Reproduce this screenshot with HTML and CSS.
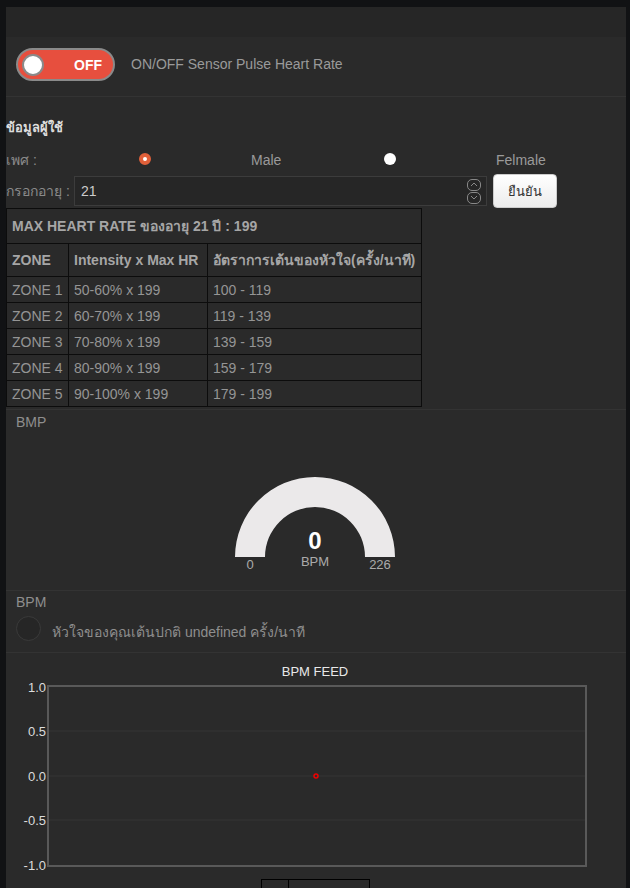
FILE: index.html
```html
<!DOCTYPE html>
<html>
<head>
<meta charset="utf-8">
<link rel="stylesheet" href="styles.css">
</head>
<body>
<div class="page">
  <div class="topbar"></div>
  <div class="main">
    <section class="switch-row">
      <div class="toggle"><span class="knob"></span><span class="toggle-text">OFF</span></div>
      <span class="switch-label">ON/OFF Sensor Pulse Heart Rate</span>
    </section>

    <section class="user">
      <div class="user-title">ข้อมูลผู้ใช้</div>
      <div class="gender-row">
        <span class="lbl">เพศ :</span>
        <span class="radio checked"></span>
        <span class="opt">Male</span>
        <span class="radio"></span>
        <span class="opt">Felmale</span>
      </div>
      <div class="age-row">
        <span class="lbl">กรอกอายุ :</span>
        <div class="age-input">
          <span class="age-val">21</span>
          <span class="spin">
            <span class="spin-btn"><svg width="8" height="5" viewBox="0 0 8 5"><path d="M1 4 L4 1 L7 4" fill="none" stroke="#888" stroke-width="1"/></svg></span>
            <span class="spin-btn"><svg width="8" height="5" viewBox="0 0 8 5"><path d="M1 1 L4 4 L7 1" fill="none" stroke="#888" stroke-width="1"/></svg></span>
          </span>
        </div>
        <button class="confirm">ยืนยัน</button>
      </div>
      <table class="zones">
        <tr><th colspan="3" class="title">MAX HEART RATE ของอายุ 21 ปี : 199</th></tr>
        <tr class="head"><th class="c1">ZONE</th><th class="c2">Intensity x Max HR</th><th class="c3">อัตราการเต้นของหัวใจ(ครั้ง/นาที)</th></tr>
        <tr><td>ZONE 1</td><td>50-60% x 199</td><td>100 - 119</td></tr>
        <tr><td>ZONE 2</td><td>60-70% x 199</td><td>119 - 139</td></tr>
        <tr><td>ZONE 3</td><td>70-80% x 199</td><td>139 - 159</td></tr>
        <tr><td>ZONE 4</td><td>80-90% x 199</td><td>159 - 179</td></tr>
        <tr><td>ZONE 5</td><td>90-100% x 199</td><td>179 - 199</td></tr>
      </table>
    </section>

    <section class="gauge-sec">
      <div class="sec-label">BMP</div>
      <div class="gauge">
        <svg class="gauge-arc" width="160" height="80" viewBox="0 0 160 80">
          <path d="M0 80 A80 80 0 0 1 160 80 L130 80 A50 50 0 0 0 30 80 Z" fill="#ebe9ea"/>
        </svg>
        <div class="gauge-val">0</div>
        <div class="gauge-unit">BPM</div>
        <div class="gauge-scale"><span>0</span><span>226</span></div>
      </div>
    </section>

    <section class="bpm-sec">
      <div class="sec-label">BPM</div>
      <div class="bpm-row">
        <span class="led"></span>
        <span class="bpm-text">หัวใจของคุณเต้นปกติ undefined ครั้ง/นาที</span>
      </div>
    </section>

    <section class="chart-sec">
      <svg class="chart" width="620" height="220" viewBox="0 0 620 220">
        <text x="309" y="20" class="ctitle" text-anchor="middle">BPM FEED</text>
        <line x1="42" y1="75" x2="580" y2="75" class="grid"/>
        <line x1="42" y1="120" x2="580" y2="120" class="grid"/>
        <line x1="42" y1="164" x2="580" y2="164" class="grid"/>
        <rect x="42" y="30" width="538" height="180" class="frame"/>
        <text x="40" y="36" class="ylab" text-anchor="end">1.0</text>
        <text x="40" y="80" class="ylab" text-anchor="end">0.5</text>
        <text x="40" y="125" class="ylab" text-anchor="end">0.0</text>
        <text x="40" y="169" class="ylab" text-anchor="end">-0.5</text>
        <text x="40" y="214" class="ylab" text-anchor="end">-1.0</text>
        <circle cx="310" cy="120" r="2" class="pt"/>
      </svg>
      <div class="legend"><span class="lg1"></span><span class="lg2"></span></div>
    </section>
  </div>
</div>
</body>
</html>
```
FILE: styles.css
```css
html, body {
  margin: 0;
  padding: 0;
  background: #111214;
  overflow: hidden;
}
body {
  font-family: "Liberation Sans", Roboto, sans-serif;
  font-size: 14px;
  color: #999;
}
.page {
  margin: 7px 4px 0 6px;
  width: 620px;
}
.topbar {
  height: 30px;
  background: #262626;
}
.main {
  background: #2a2a2a;
}
.switch-row {
  height: 60px;
  border-bottom: 1px solid #333;
  display: flex;
  align-items: flex-start;
  padding: 11px 0 0 10px;
  box-sizing: border-box;
  gap: 16px;
}
.toggle {
  width: 99px;
  height: 33px;
  box-sizing: border-box;
  border: 2px solid #8a8a8a;
  border-radius: 17px;
  background: #e74f3e;
  display: flex;
  align-items: center;
  padding-left: 4px;
}
.knob {
  width: 18px;
  height: 18px;
  border-radius: 50%;
  background: #fff;
  border: 2px solid #8a8a8a;
}
.toggle-text {
  margin-left: 30px;
  color: #fff;
  font-weight: bold;
  font-size: 14px;
}
.switch-label {
  line-height: 33px;
  color: #9a9a9a;
  font-size: 14px;
}
.user {
  padding-top: 22px;
}
.user-title {
  height: 18px;
  line-height: 18px;
  font-weight: bold;
  font-size: 13px;
  color: #ddd;
}
.gender-row {
  margin-top: 12px;
  height: 20px;
  display: grid;
  grid-template-columns: 133px 112px 133px 112px 1fr;
  align-items: center;
}
.lbl {
  color: #8a8a8a;
  font-size: 14px;
}
.opt {
  color: #9a9a9a;
  font-size: 14px;
}
.radio {
  width: 12px;
  height: 12px;
  border-radius: 50%;
  background: #fff;
  box-sizing: border-box;
  margin-top: -3px;
}
.radio.checked {
  background: #fff;
  border: 4px solid #e0603a;
}
.age-row {
  margin-top: 5px;
  display: flex;
  align-items: center;
  height: 34px;
}
.age-row .lbl {
  width: 68px;
}
.age-input {
  width: 413px;
  height: 30px;
  box-sizing: border-box;
  border: 1px solid #3c3c3c;
  background: #262626;
  display: flex;
  align-items: center;
  padding: 0 5px 0 6px;
}
.age-val {
  flex: 1;
  color: #ccc;
  font-size: 14px;
}
.spin {
  display: flex;
  flex-direction: column;
  gap: 1px;
}
.spin-btn {
  width: 14px;
  height: 12px;
  border: 1px solid #888;
  border-radius: 5px;
  box-sizing: border-box;
  display: flex;
  align-items: center;
  justify-content: center;
}
.spin-btn svg {
  display: block;
}
.confirm {
  margin-left: 6px;
  width: 64px;
  height: 34px;
  border: 1px solid #ccc;
  border-radius: 4px;
  background: linear-gradient(#ffffff, #ececec);
  color: #333;
  font-size: 13px;
  font-family: "Liberation Sans", Roboto, sans-serif;
  padding: 0;
}
.zones {
  margin-top: 0;
  border-collapse: collapse;
  width: 416px;
  font-size: 14px;
}
.zones th, .zones td {
  border: 1px solid #0c0c0c;
  text-align: left;
  padding: 0 5px;
  white-space: nowrap;
}
.zones th {
  color: #a6a6a6;
  font-weight: bold;
  height: 32px;
}
.zones th.title {
  font-size: 14px;
  height: 34px;
}
.zones td {
  color: #959595;
  height: 25px;
}
.zones .c1 { width: 51px; }
.zones .c2 { width: 128px; }
.gauge-sec {
  margin-top: 2px;
  border-top: 1px solid #333;
  height: 181px;
  box-sizing: border-box;
  padding: 5px 10px 0 10px;
}
.sec-label {
  font-size: 14px;
  color: #8e8e8e;
  line-height: 15px;
}
.gauge {
  margin-top: 47px;
  display: flex;
  flex-direction: column;
  align-items: center;
  position: relative;
  width: 160px;
  margin-left: 219px;
}
.gauge-arc {
  display: block;
}
.gauge-val {
  position: absolute;
  top: 50px;
  width: 100%;
  text-align: center;
  font-size: 24px;
  font-weight: bold;
  color: #fff;
}
.gauge-unit {
  position: absolute;
  top: 77px;
  width: 100%;
  text-align: center;
  font-size: 13px;
  color: #aaa;
}
.gauge-scale {
  width: 160px;
  display: flex;
  justify-content: space-between;
  font-size: 13px;
  color: #aaa;
}
.gauge-scale span {
  width: 30px;
  text-align: center;
}
.bpm-sec {
  border-top: 1px solid #333;
  height: 62px;
  box-sizing: border-box;
  padding: 4px 10px 0 10px;
}
.bpm-row {
  display: flex;
  align-items: center;
  margin-top: 3px;
  gap: 11px;
}
.led {
  width: 25px;
  height: 25px;
  border-radius: 50%;
  background: #262626;
  border: 1px solid #3a3a3a;
  box-sizing: border-box;
}
.bpm-text {
  font-size: 14px;
  color: #8e8e8e;
  margin-top: 8px;
}
.chart-sec {
  border-top: 1px solid #333;
  height: 240px;
  padding-top: 3px;
  box-sizing: border-box;
}
.chart {
  display: block;
}
.ctitle {
  font-size: 13px;
  fill: #e8e8e8;
}
.ylab {
  font-size: 13px;
  fill: #dcdcdc;
}
.grid {
  stroke: #353535;
  stroke-width: 1;
}
.frame {
  fill: none;
  stroke: #595959;
  stroke-width: 2;
}
.pt {
  fill: none;
  stroke: #e00;
  stroke-width: 1.5;
}
.legend {
  margin: 3px 0 0 255px;
  display: flex;
  height: 20px;
}
.lg1 {
  width: 26px;
  border: 1px solid #000;
}
.lg2 {
  width: 80px;
  border: 1px solid #000;
  border-left: none;
}
```
